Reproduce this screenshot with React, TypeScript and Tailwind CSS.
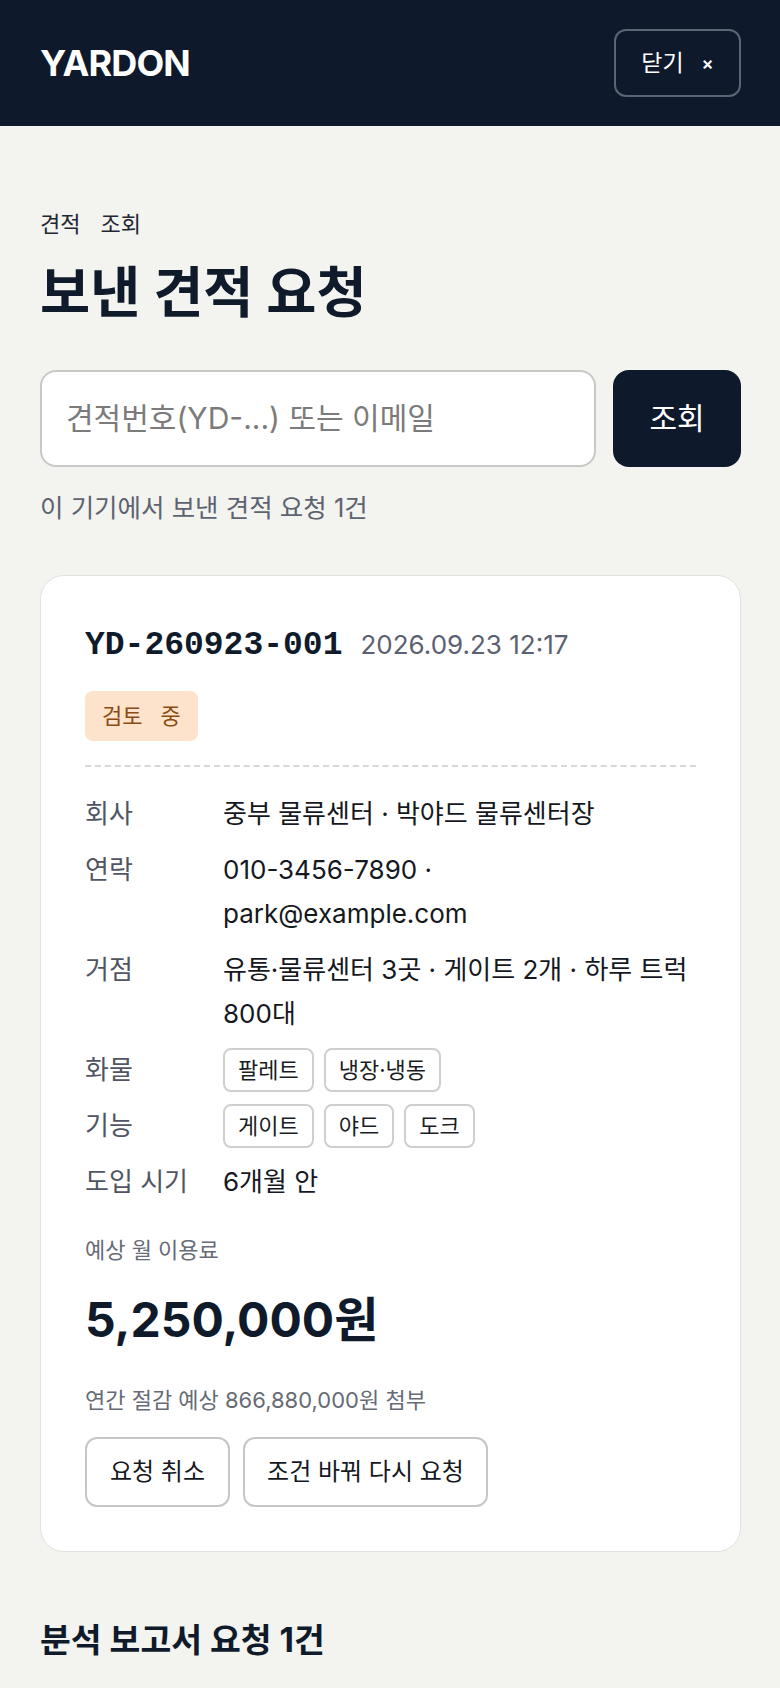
import React from 'react'

interface Row {
  label: string
  value?: string[]
  chips?: string[]
}

const rows: Row[] = [
  { label: '회사', value: ['중부 물류센터 · 박야드 물류센터장'] },
  { label: '연락', value: ['010-3456-7890 ·', 'park@example.com'] },
  { label: '거점', value: ['유통·물류센터 3곳 · 게이트 2개 · 하루 트럭', '800대'] },
  { label: '화물', chips: ['팔레트', '냉장·냉동'] },
  { label: '기능', chips: ['게이트', '야드', '도크'] },
  { label: '도입 시기', value: ['6개월 안'] },
]

export default function App() {
  return (
    <div className="min-h-[1688px] bg-[#f3f3ef] font-['Inter','Noto_Sans_CJK_KR',sans-serif] text-[#0f1b2b]">
      {/* Header */}
      <header className="h-[126px] bg-[#0e1a2b] pl-10 pr-[39px] flex items-center justify-between">
        <div className="text-[36px] font-bold tracking-tight text-white">YARDON</div>
        <button className="h-[68px] w-[127px] rounded-xl border-2 border-[#5b6574] flex items-center justify-center gap-[18px] text-white">
          <span className="text-[23px]">닫기</span>
          <span className="text-[18px] font-semibold">×</span>
        </button>
      </header>

      <main className="pl-10 pr-[39px] pt-[83px] pb-10">
        <div className="flex gap-5 text-[22px] leading-[30px] text-[#1f2733]">
          <span>견적</span>
          <span>조회</span>
        </div>
        <h1 className="mt-6 text-[54.5px] leading-[58px] font-bold">보낸 견적 요청</h1>

        {/* Search */}
        <div className="mt-[49px] flex gap-[17px]">
          <div className="flex-1 h-[97px] rounded-2xl border-2 border-[#c8c8c6] bg-white flex items-center pl-6">
            <span className="text-[30px] text-[#7b7b7b]">견적번호(YD-...) 또는 이메일</span>
          </div>
          <button className="w-[128px] h-[97px] rounded-2xl bg-[#0e1a2b] text-white text-[30px]">조회</button>
        </div>
        <p className="mt-[23px] text-[25.5px] leading-[36px] text-[#5d6470]">이 기기에서 보낸 견적 요청 1건</p>

        {/* Card */}
        <div className="mt-[49px] rounded-3xl border border-[#e2e2de] bg-white p-[44px]">
          <div className="flex items-baseline gap-[18px] leading-[50px]">
            <span className="font-mono text-[33px] font-bold text-[#0f1b2b]">YD-260923-001</span>
            <span className="text-[26px] text-[#5b6170]">2026.09.23 12:17</span>
          </div>
          <div className="mt-5 inline-flex h-[50px] items-center rounded-lg bg-[#fde3cb] px-[17px] text-[22px] text-[#8a4b14] gap-[18px]">
            <span>검토</span>
            <span>중</span>
          </div>
          <div className="mt-6 border-t-2 border-dashed border-[#d8d8d8]" />

          <div className="mt-[25px] flex flex-col gap-3 text-[26px] leading-[44px]">
            {rows.map((row) => (
              <div key={row.label} className="flex">
                <div className="w-[138px] shrink-0 text-[#4f5562]">{row.label}</div>
                {row.value && (
                  <div className="text-[#15181e]">
                    {row.value.map((line) => (
                      <div key={line}>{line}</div>
                    ))}
                  </div>
                )}
                {row.chips && (
                  <div className="flex gap-[10px]">
                    {row.chips.map((chip) => (
                      <span
                        key={chip}
                        className="h-[44px] flex items-center rounded-lg border-2 border-[#cfcfcd] px-[13px] text-[22px] text-[#1a1d23]"
                      >
                        {chip}
                      </span>
                    ))}
                  </div>
                )}
              </div>
            ))}
          </div>

          <p className="mt-[31px] text-[22px] leading-[30px] text-[#666b75]">예상 월 이용료</p>
          <p className="mt-[26px] text-[48px] leading-[58px] font-bold text-[#0f1b2b]">5,250,000원</p>
          <p className="mt-9 text-[22px] leading-[30px] text-[#666b75]">연간 절감 예상 866,880,000원 첨부</p>

          <div className="mt-[22px] flex gap-[13px]">
            <button className="h-[70px] w-[145px] rounded-xl border-2 border-[#c6c6c4] bg-white text-[24px] text-[#15181e]">
              요청 취소
            </button>
            <button className="h-[70px] w-[245px] rounded-xl border-2 border-[#c6c6c4] bg-white text-[24px] text-[#15181e]">
              조건 바꿔 다시 요청
            </button>
          </div>
        </div>

        <h2 className="mt-[69px] text-[33.5px] leading-[39px] font-bold">분석 보고서 요청 1건</h2>
      </main>
    </div>
  )
}
